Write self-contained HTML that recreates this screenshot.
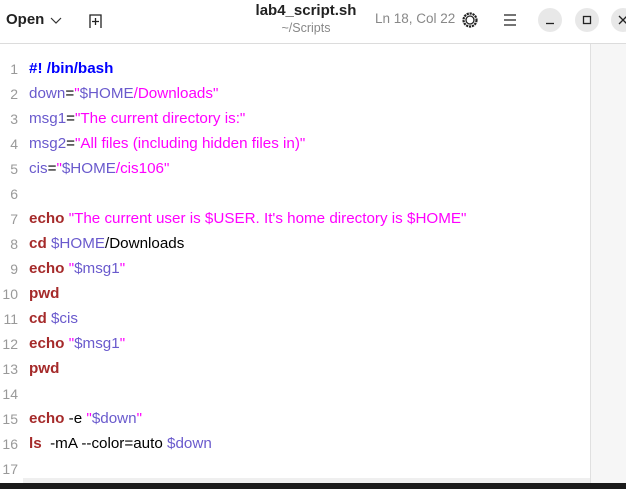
<!DOCTYPE html><html><head><style>
body{margin:0;width:626px;height:489px;overflow:hidden;background:#fff;font-family:"Liberation Sans",sans-serif;position:relative}
.hdr{position:absolute;left:0;top:0;width:626px;height:43px;background:#fff;border-bottom:1px solid #dcdcdc}
.t{position:absolute;white-space:nowrap}
.circ{position:absolute;width:24px;height:24px;border-radius:50%;background:#e8e8e8;top:8px}
.mini{position:absolute;left:590px;top:44px;width:36px;height:439px;background:#f6f6f6;border-left:1px solid #e0e0e0}
.ln{position:absolute;left:0;width:18px;text-align:right;color:#999;font-size:14px}
.code{position:absolute;left:29px;font-size:15.2px;color:#000;white-space:pre}
.k{color:#a52a2a;font-weight:bold}.v{color:#6a5acd}.s{color:#ff00ff}.b{color:#0000ff;font-weight:bold}
</style></head><body>
<div class="hdr">
<div class="t" style="left:6px;top:11px;font-size:15px;font-weight:bold;color:#222">Open</div>
<svg style="position:absolute;left:50px;top:16px" width="12" height="10"><path d="M1 2l5 5 5-5" fill="none" stroke="#333" stroke-width="1.2"/></svg>
<svg style="position:absolute;left:88px;top:13px" width="16" height="16"><path d="M2 15V2h11v13" fill="none" stroke="#222" stroke-width="1.3"/><path d="M7.5 5v7M4 8.5h7" stroke="#222" stroke-width="1.3"/></svg>
<div class="t" style="left:210px;width:192px;text-align:center;top:2px;font-size:15px;font-weight:bold;color:#222">lab4_script.sh</div>
<div class="t" style="left:210px;width:192px;text-align:center;top:21px;font-size:12.5px;color:#888">~/Scripts</div>
<div class="t" style="left:375px;top:11px;font-size:13.5px;color:#888">Ln 18, Col 22</div>
<svg style="position:absolute;left:461px;top:11px" width="18" height="18"><circle cx="9" cy="9" r="6.5" fill="none" stroke="#222" stroke-width="2.2" stroke-dasharray="2.2 0.8"/><circle cx="9" cy="9" r="4" fill="none" stroke="#222" stroke-width="1.3"/></svg>
<svg style="position:absolute;left:503px;top:13px" width="14" height="14"><path d="M1 2h12M1 7h12M1 12h12" stroke="#222" stroke-width="1.3"/></svg>
<div class="circ" style="left:538px"></div><svg style="position:absolute;left:545px;top:15px" width="10" height="10"><path d="M1 8.5h8" stroke="#222" stroke-width="1.3"/></svg>
<div class="circ" style="left:575px"></div><svg style="position:absolute;left:582px;top:15px" width="10" height="10"><rect x="1.5" y="1.5" width="7" height="7" fill="none" stroke="#222" stroke-width="1.3"/></svg>
<div class="circ" style="left:611px"></div><svg style="position:absolute;left:618px;top:15px" width="10" height="10"><path d="M1 1l8 8M9 1l-8 8" stroke="#222" stroke-width="1.3"/></svg>
</div>
<div class="mini"></div>
<div style="position:absolute;left:23px;top:478px;width:567px;height:5px;background:#efefef"></div>
<div style="position:absolute;left:0;top:483px;width:626px;height:6px;background:#1a1a1a"></div>
<div class="ln" style="top:61px">1</div><div class="code" style="top:60px"><span class="b">#! /bin/bash</span></div>
<div class="ln" style="top:86px">2</div><div class="code" style="top:85px"><span class="v">down</span>=<span class="s">"</span><span class="v">$HOME</span><span class="s">/Downloads"</span></div>
<div class="ln" style="top:111px">3</div><div class="code" style="top:110px"><span class="v">msg1</span>=<span class="s">"The current directory is:"</span></div>
<div class="ln" style="top:136px">4</div><div class="code" style="top:135px"><span class="v">msg2</span>=<span class="s">"All files (including hidden files in)"</span></div>
<div class="ln" style="top:161px">5</div><div class="code" style="top:160px"><span class="v">cis</span>=<span class="s">"</span><span class="v">$HOME</span><span class="s">/cis106"</span></div>
<div class="ln" style="top:186px">6</div>
<div class="ln" style="top:211px">7</div><div class="code" style="top:210px"><span class="k">echo</span> <span class="s">"The current user is $USER. It's home directory is $HOME"</span></div>
<div class="ln" style="top:236px">8</div><div class="code" style="top:235px"><span class="k">cd</span> <span class="v">$HOME</span>/Downloads</div>
<div class="ln" style="top:261px">9</div><div class="code" style="top:260px"><span class="k">echo</span> <span class="s">"</span><span class="v">$msg1</span><span class="s">"</span></div>
<div class="ln" style="top:286px">10</div><div class="code" style="top:285px"><span class="k">pwd</span></div>
<div class="ln" style="top:311px">11</div><div class="code" style="top:310px"><span class="k">cd</span> <span class="v">$cis</span></div>
<div class="ln" style="top:336px">12</div><div class="code" style="top:335px"><span class="k">echo</span> <span class="s">"</span><span class="v">$msg1</span><span class="s">"</span></div>
<div class="ln" style="top:361px">13</div><div class="code" style="top:360px"><span class="k">pwd</span></div>
<div class="ln" style="top:386px">14</div>
<div class="ln" style="top:411px">15</div><div class="code" style="top:410px"><span class="k">echo</span> -e <span class="s">"</span><span class="v">$down</span><span class="s">"</span></div>
<div class="ln" style="top:436px">16</div><div class="code" style="top:435px"><span class="k">ls</span>  -mA --color=auto <span class="v">$down</span></div>
<div class="ln" style="top:461px">17</div>
</body></html>
